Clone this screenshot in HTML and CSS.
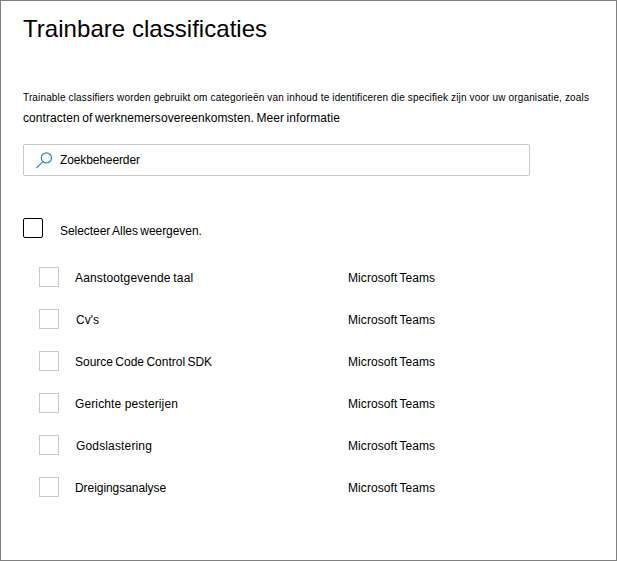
FILE: index.html
```html
<!DOCTYPE html>
<html lang="nl">
<head>
<meta charset="utf-8">
<title>Trainbare classificaties</title>
<link rel="stylesheet" href="styles.css">
</head>
<body>
<main class="panel">
  <h1 class="title">Trainbare classificaties</h1>
  <p class="intro"><span class="intro-first">Trainable classifiers worden gebruikt om categorieën van inhoud te identificeren die specifiek zijn voor uw organisatie, zoals</span><span class="intro-second">contracten of werknemersovereenkomsten. Meer informatie</span></p>
  <div class="search">
    <svg class="search-icon" width="17" height="17" viewBox="0 0 17 17"><circle cx="10.4" cy="5.9" r="5.1"/><path d="M6.8 9.6 L0.4 16"/></svg>
    <span class="search-text">Zoekbeheerder</span>
  </div>
  <div class="select-all"><span class="box box-dark"></span><span class="all-text">Selecteer Alles weergeven.</span></div>
  <ul class="list">
    <li class="row"><span class="box"></span><span class="name n1">Aanstootgevende taal</span><span class="app">Microsoft Teams</span></li>
    <li class="row"><span class="box"></span><span class="name n2">Cv's</span><span class="app">Microsoft Teams</span></li>
    <li class="row"><span class="box"></span><span class="name n3">Source Code Control SDK</span><span class="app">Microsoft Teams</span></li>
    <li class="row"><span class="box"></span><span class="name n4">Gerichte pesterijen</span><span class="app">Microsoft Teams</span></li>
    <li class="row"><span class="box"></span><span class="name n5">Godslastering</span><span class="app">Microsoft Teams</span></li>
    <li class="row"><span class="box"></span><span class="name n6">Dreigingsanalyse</span><span class="app">Microsoft Teams</span></li>
  </ul>
</main>
</body>
</html>
```
FILE: styles.css
```css
* { box-sizing: border-box; }
body { margin: 0; background: #fff; color: #000; font: 12px/16px "Liberation Sans", Arial, sans-serif; white-space: nowrap; }
.panel { width: 617px; height: 561px; border: 1px solid #808080; padding: 13px 22px 0; overflow: hidden; }
.title { margin: 0; font-size: 24px; line-height: 30px; font-weight: 400; letter-spacing: 0.04px; }
.intro { margin: 44px 0 0; line-height: 20px; }
.intro span { display: block; }
.intro-first { font-size: 10px; letter-spacing: 0.15px; }
.intro-second { letter-spacing: 0.06px; word-spacing: -0.8px; }
.search { display: flex; align-items: center; width: 507px; height: 32px; margin-top: 16px; padding-left: 12px; border: 1px solid #c8c8c8; border-radius: 2px; }
.search-icon { margin-right: 7px; fill: none; stroke: #2b88d8; stroke-width: 1.2; }
.search-text { letter-spacing: -0.12px; }
.box { flex: none; width: 20px; height: 20px; border: 1px solid #c8c8c8; }
.box-dark { border-color: #000; border-radius: 2px; }
.select-all { display: flex; margin-top: 42px; }
.all-text { margin: 5px 0 0 17px; letter-spacing: -0.05px; word-spacing: -0.8px; }
.list { list-style: none; margin: 17px 0 0; padding: 0 0 0 16px; }
.row { display: flex; align-items: center; height: 42px; }
.name { width: 273px; margin: 2px 0 0 16px; }
.n1 { letter-spacing: 0.15px; word-spacing: -0.8px; }
.n2, .n5 { padding-left: 1px; }
.n3 { word-spacing: -1px; }
.n4 { letter-spacing: 0.12px; }
.n5 { letter-spacing: 0.15px; }
.n6 { letter-spacing: -0.06px; }
.app { margin-top: 2px; letter-spacing: 0.08px; word-spacing: -1.2px; }
```
